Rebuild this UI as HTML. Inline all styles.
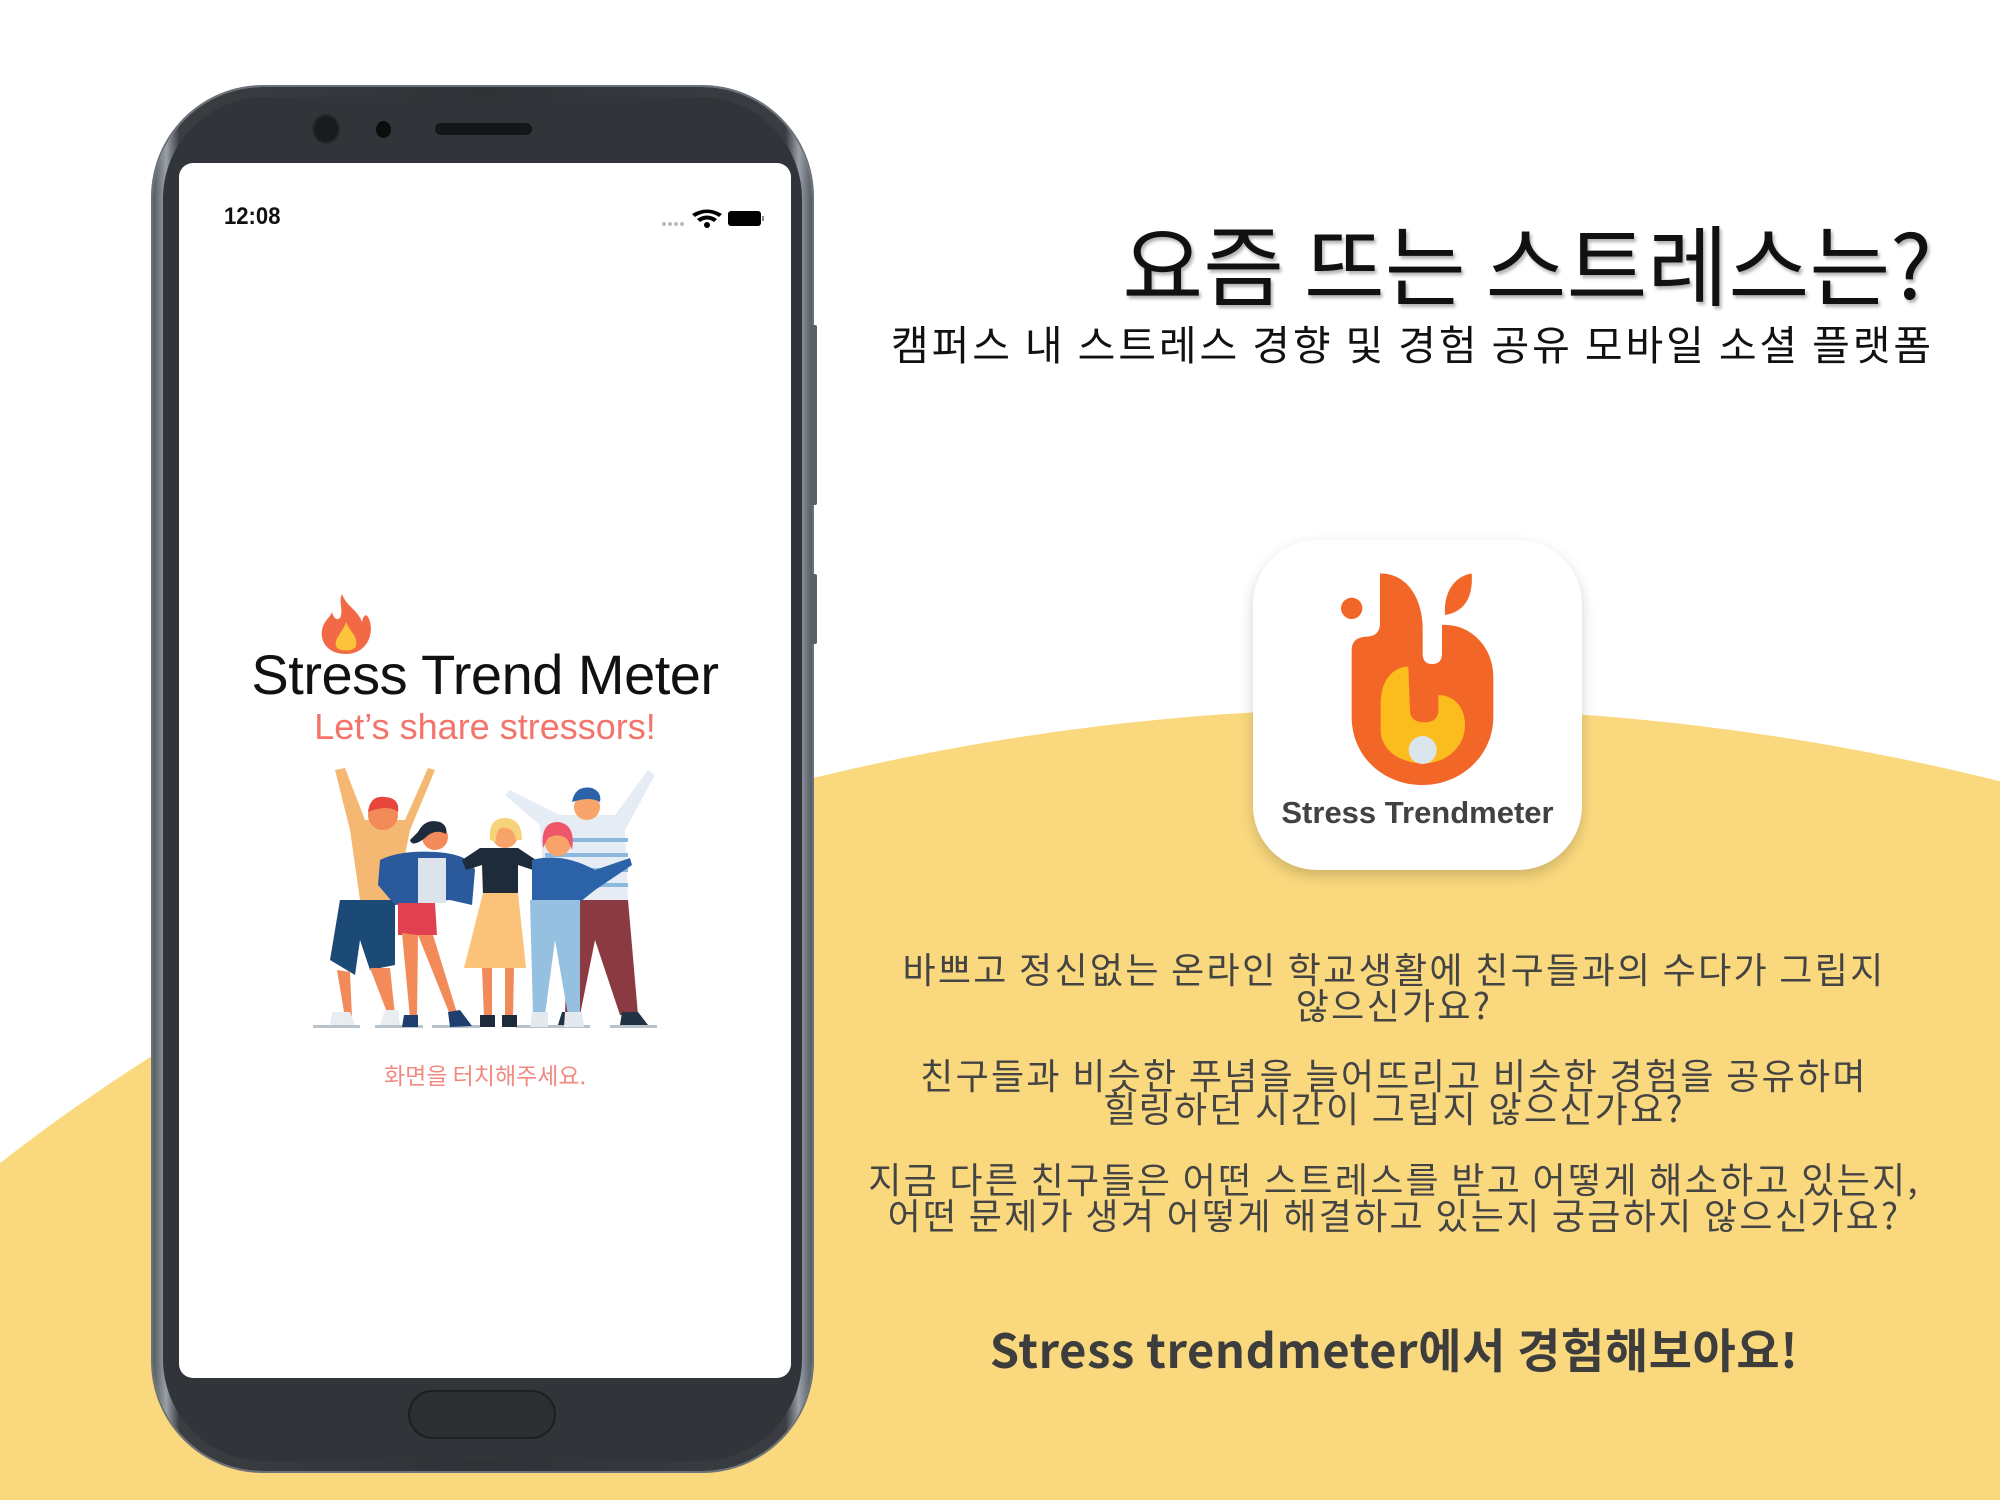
<!DOCTYPE html>
<html><head><meta charset="utf-8"><style>
html,body{margin:0;padding:0;overflow:hidden}
body{width:2000px;height:1500px;position:relative;overflow:hidden;background:#fff;font-family:"Liberation Sans","Noto Sans CJK KR",sans-serif}
.abs{position:absolute}
.k{font-family:"Noto Sans CJK KR","Liberation Sans",sans-serif}
</style></head><body>
<svg class="abs" style="left:0;top:0" width="2000" height="1500"><ellipse cx="1400" cy="2300" rx="2000" ry="1592" fill="#fad97e"/></svg>

<!-- phone -->
<div class="abs" style="left:153px;top:87px;width:659px;height:1384px;border-radius:110px;background:linear-gradient(90deg,#555b62,#9aa0a7 2%,#3a3d42 4%,#2f3236 50%,#3a3d42 96%,#9aa0a7 98%,#555b62);box-shadow:0 0 0 2px #6b7178"></div>
<div class="abs" style="left:163px;top:97px;width:639px;height:1364px;border-radius:102px;background:#313438"></div>
<div class="abs" style="left:811px;top:325px;width:6px;height:180px;background:#5a5f66;border-radius:2px"></div>
<div class="abs" style="left:811px;top:574px;width:6px;height:70px;background:#5a5f66;border-radius:2px"></div>
<div class="abs" style="left:179px;top:163px;width:612px;height:1215px;background:#fff;border-radius:14px"></div>
<div class="abs" style="left:314px;top:116px;width:24px;height:26px;border-radius:50%;background:#1a1b1d;box-shadow:0 0 0 2px #26282b"></div>
<div class="abs" style="left:376px;top:121px;width:15px;height:17px;border-radius:50%;background:#0c0c0d"></div>
<div class="abs" style="left:435px;top:123px;width:97px;height:12px;border-radius:6px;background:#151617"></div>
<div class="abs" style="left:408px;top:1390px;width:148px;height:49px;border-radius:25px;border:2px solid #1d1f22;box-sizing:border-box;background:#2c2e32"></div>

<div class="abs" style="left:224px;top:203px;font-size:24px;color:#111;font-weight:bold;transform:scaleX(0.92);transform-origin:left">12:08</div>
<svg class="abs" style="left:655px;top:206px" width="115" height="26">
<g fill="#bbb"><circle cx="9" cy="18" r="2"/><circle cx="15" cy="18" r="2"/><circle cx="21" cy="18" r="2"/><circle cx="27" cy="18" r="2"/></g>
<path d="M37 8 Q52 -1 67 8 L64 11 Q52 3 40 11Z M42 13 Q52 6 62 13 L59 16 Q52 11 45 16Z" fill="#000"/><circle cx="52" cy="19" r="3" fill="#000"/>
<rect x="73" y="5" width="33" height="15" rx="3" fill="#000"/><rect x="107" y="10" width="2" height="5" fill="#888"/>
</svg>

<!-- flame -->
<svg class="abs" style="left:318px;top:592px" width="56" height="66" viewBox="0 0 56 66">
<path d="M24 2 C28 14 40 18 44 30 C46 20 50 22 52 30 C56 46 46 62 28 62 C10 62 2 50 4 38 C6 28 12 26 14 20 C16 28 20 28 22 26 C26 18 20 10 24 2Z" fill="#f26a45"/>
<path d="M28 30 C32 40 40 44 38 54 C36 60 20 60 18 54 C16 46 24 42 28 30Z" fill="#fcc43a"/>
</svg>
<div class="abs" style="left:179px;width:612px;top:642px;text-align:center;font-size:56px;color:#111;letter-spacing:-0.5px">Stress Trend Meter</div>
<div class="abs" style="left:179px;width:612px;top:706px;text-align:center;font-size:36px;color:#f4736a">Let’s share stressors!</div>

<!-- people -->
<svg class="abs" style="left:300px;top:740px" width="380" height="300" viewBox="0 0 380 300">
<g fill="#b9c3cc"><rect x="13" y="285" width="47" height="3"/><rect x="75" y="285" width="48" height="3"/><rect x="132" y="285" width="48" height="3"/><rect x="216" y="285" width="74" height="3"/><rect x="310" y="285" width="47" height="3"/></g>
<path d="M35 30 L50 90 L60 160 L95 165 L110 90 L135 30 L128 28 L105 80 L65 80 L45 28Z" fill="#f5b872"/>
<path d="M40 160 L30 220 L55 235 L60 200 L70 230 L95 225 L95 160Z" fill="#1a4a75"/>
<path d="M37 230 L45 278 L52 278 L50 232Z M70 228 L88 275 L95 275 L90 228Z" fill="#f28a5a"/>
<path d="M32 272 L50 272 L55 285 L30 285Z M85 270 L98 270 L100 285 L80 285Z" fill="#e8edf2"/>
<circle cx="83" cy="75" r="15" fill="#f28a5a"/><path d="M68 72 Q70 55 85 57 Q100 58 98 72 Q88 64 68 72Z" fill="#e8463c"/>
<path d="M205 55 L240 85 L245 165 L328 160 L325 90 L355 35 L348 30 L315 75 L260 75 L210 50Z" fill="#e6ecf3"/>
<g stroke="#8ab8de" stroke-width="4"><line x1="245" y1="100" x2="328" y2="100"/><line x1="245" y1="115" x2="328" y2="115"/><line x1="245" y1="130" x2="328" y2="130"/><line x1="245" y1="145" x2="328" y2="145"/></g>
<path d="M268 160 L265 275 L280 275 L295 200 L320 275 L338 275 L328 160Z" fill="#8a3a40"/>
<path d="M262 272 L282 272 L282 285 L258 285Z M322 272 L338 272 L348 285 L320 285Z" fill="#234"/>
<circle cx="287" cy="67" r="13" fill="#f7a36a"/><path d="M272 62 Q275 45 292 48 Q302 52 300 62 Q290 56 272 62Z" fill="#2c63a8"/>
<path d="M80 120 Q100 110 135 112 Q170 114 175 130 L172 165 L150 160 L95 165 L78 145Z" fill="#2a5a9c"/>
<rect x="118" y="118" width="28" height="45" fill="#dde3ea"/>
<path d="M98 163 L135 163 L137 195 L98 195Z" fill="#e04050"/>
<path d="M102 193 L110 278 L117 278 L118 195Z M118 195 L150 275 L157 273 L133 195Z" fill="#f28a5a"/>
<path d="M104 275 L118 275 L118 287 L102 287Z M148 272 L160 270 L172 286 L150 287Z" fill="#1e3f6e"/>
<circle cx="135" cy="97" r="13" fill="#f28a5a"/><path d="M118 92 Q125 78 140 82 Q148 86 146 94 Q135 88 125 98 Q112 108 110 100Z" fill="#1d2b3a"/>
<path d="M162 120 L180 108 L218 108 L236 120 L233 130 L218 125 L218 155 L183 155 L182 125 L166 130Z" fill="#1d2b3a"/>
<path d="M183 153 L218 153 L226 228 L164 228Z" fill="#fbc27a"/>
<path d="M182 228 L184 278 L192 278 L192 228Z M205 228 L205 278 L213 278 L214 228Z" fill="#f28a5a"/>
<path d="M180 275 L195 275 L195 287 L180 287Z M202 275 L217 275 L217 287 L202 287Z" fill="#1d2b3a"/>
<circle cx="205" cy="95" r="13" fill="#f7a36a"/><path d="M190 100 Q188 78 205 78 Q222 78 222 100 L216 100 Q214 86 200 88 Q195 95 196 102Z" fill="#f6d27a"/>
<path d="M232 120 Q262 112 295 130 L330 118 L332 125 L295 150 L280 162 L232 162Z" fill="#2c63a8"/>
<path d="M230 160 L280 160 L280 275 L268 275 L255 200 L245 275 L233 275Z" fill="#95c0e0"/>
<path d="M232 272 L248 272 L248 287 L230 287Z M265 272 L282 272 L284 287 L264 287Z" fill="#e4e9ee"/>
<circle cx="258" cy="103" r="13" fill="#f7a36a"/><path d="M243 108 Q240 82 258 82 Q276 84 272 110 L268 100 Q260 92 248 98Z" fill="#f0566a"/>
</svg>
<div class="abs k" style="left:179px;width:612px;top:1057px;text-align:center;font-size:23px;color:#f08a80">화면을 터치해주세요.</div>

<!-- headline -->
<div class="abs k" style="right:68px;top:218px;font-size:88px;color:#111;line-height:1;text-shadow:2px 3px 3px rgba(0,0,0,.3);white-space:nowrap">요즘 뜨는 스트레스는?</div>
<div class="abs k" style="right:66px;top:320px;font-size:41px;color:#111;line-height:1.1;white-space:nowrap;letter-spacing:2.9px">캠퍼스 내 스트레스 경향 및 경험 공유 모바일 소셜 플랫폼</div>

<!-- app icon -->
<div class="abs" style="left:1253px;top:540px;width:329px;height:330px;border-radius:64px;background:#fff;box-shadow:0 6px 14px rgba(0,0,0,.18)"></div>
<svg class="abs" style="left:1230px;top:530px" width="360" height="350" viewBox="0 0 1080 1050">
<circle cx="365" cy="235" r="32" fill="#f26727"/>
<path d="M450 130 C540 130 580 220 578 300 L578 370 Q578 402 606 402 Q636 402 636 370 L636 285 C720 280 790 350 790 440 L790 560 C790 680 690 765 578 765 C460 765 365 680 365 560 L365 360 Q365 322 410 320 Q450 318 450 280Z" fill="#f26727"/>
<path d="M725 130 C670 140 640 190 645 255 C705 245 730 200 725 130Z" fill="#f26727"/>
<path d="M535 410 C490 410 452 450 452 520 L452 600 C452 660 510 700 580 700 C650 700 705 650 705 585 C705 530 670 495 625 495 L625 540 Q625 577 583 577 Q540 577 540 540Z" fill="#fbbd1e"/>
<circle cx="578" cy="660" r="42" fill="#dbe5ec"/>
</svg>
<div class="abs" style="left:1253px;width:329px;top:795px;text-align:center;font-size:31px;font-weight:bold;color:#424242">Stress Trendmeter</div>

<!-- paragraphs -->
<div class="abs k" style="left:794px;width:1200px;top:950px;text-align:center;font-size:36px;line-height:36px;color:#444;letter-spacing:2.3px">바쁘고 정신없는 온라인 학교생활에 친구들과의 수다가 그립지<br>않으신가요?</div>
<div class="abs k" style="left:794px;width:1200px;top:1058px;text-align:center;font-size:36px;line-height:33px;color:#444;letter-spacing:2.3px">친구들과 비슷한 푸념을 늘어뜨리고 비슷한 경험을 공유하며<br>힐링하던 시간이 그립지 않으신가요?</div>
<div class="abs k" style="left:794px;width:1200px;top:1160px;text-align:center;font-size:36px;line-height:36px;color:#444;letter-spacing:2.3px">지금 다른 친구들은 어떤 스트레스를 받고 어떻게 해소하고 있는지,<br>어떤 문제가 생겨 어떻게 해결하고 있는지 궁금하지 않으신가요?</div>
<div class="abs k" style="left:794px;width:1200px;top:1322px;text-align:center;font-size:47px;font-weight:bold;line-height:1.1;color:#3d3d3d;letter-spacing:0.6px">Stress trendmeter에서 경험해보아요!</div>
</body></html>
